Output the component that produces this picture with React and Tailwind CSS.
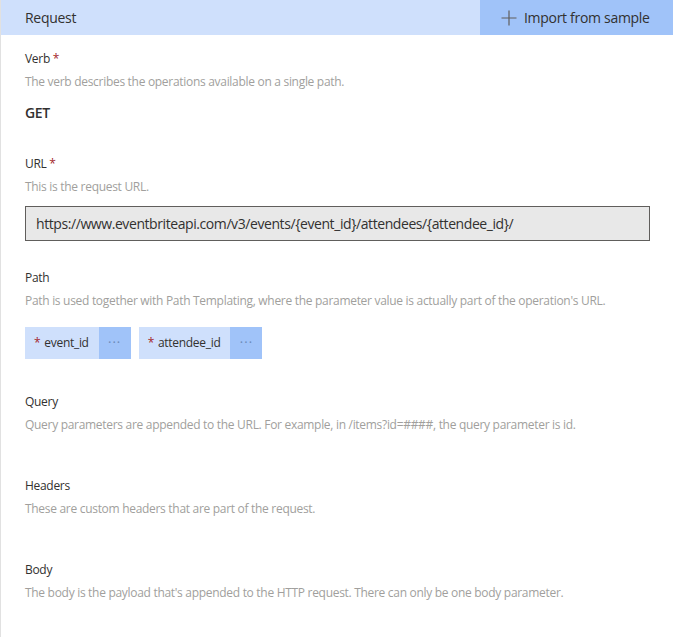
import React from "react";

const font = { fontFamily: '"Open Sans", "Noto Sans", sans-serif' };

function Label({ children, required }) {
  return (
    <div className="text-[12px] leading-[16px] tracking-[-0.3px] text-[#323130]">
      {children}
      {required && <span className="text-[#a4262c]"> *</span>}
    </div>
  );
}

function Desc({ children }) {
  return <div className="mt-[7px] text-[12px] leading-[16px] tracking-[-0.3px] text-[#a19f9d]">{children}</div>;
}

function Chip({ name }) {
  return (
    <div className="flex h-[32px] bg-[#cfe0fc]">
      <div className="flex items-center pl-[9px] pr-[10px] text-[12px] tracking-[-0.3px] text-[#323130]">
        <span className="text-[#a4262c]">*</span>
        <span className="ml-[4px]">{name}</span>
      </div>
      <div className="flex w-[32px] items-center justify-center bg-[#a0c3f9] text-[13px] tracking-[1px] text-[#6b8ab8]">
        ···
      </div>
    </div>
  );
}

export default function App() {
  return (
    <div className="h-[637px] w-[673px] border-l border-[#e1e1e1] bg-white" style={font}>
      <div className="flex h-[35px] items-center justify-between bg-[#cfe0fc]">
        <div className="pl-[24px] text-[14px] tracking-[-0.3px] text-[#323130]">Request</div>
        <div className="flex h-full w-[193px] items-center bg-[#a0c3f9] pl-[21px] text-[14px] tracking-[-0.3px] text-[#323130]">
          <svg width="16" height="16" viewBox="0 0 16 16" className="mr-[7px]">
            <path d="M8 0.5V15.5M0.5 8H15.5" stroke="#605e5c" strokeWidth="1.2" fill="none" />
          </svg>
          Import from sample
        </div>
      </div>
      <div className="px-[24px]">
        <div className="mt-[16px]">
          <Label required>Verb</Label>
          <Desc>The verb describes the operations available on a single path.</Desc>
          <div className="mt-[13px] text-[14px] font-semibold leading-[20px] tracking-[-0.3px] text-[#323130]">GET</div>
        </div>
        <div className="mt-[33px]">
          <Label required>URL</Label>
          <Desc>This is the request URL.</Desc>
          <div className="mt-[11px] flex h-[35px] w-[625px] items-center border border-[#605e5c] bg-[#e8e8e8] px-[10px] text-[14px] tracking-[-0.42px] text-[#323130]">
            https://www.eventbriteapi.com/v3/events/{"{event_id}"}/attendees/{"{attendee_id}"}/
          </div>
        </div>
        <div className="mt-[29px]">
          <Label>Path</Label>
          <Desc>Path is used together with Path Templating, where the parameter value is actually part of the operation's URL.</Desc>
          <div className="mt-[18px] flex gap-[8px]">
            <Chip name="event_id" />
            <Chip name="attendee_id" />
          </div>
        </div>
        <div className="mt-[35px]">
          <Label>Query</Label>
          <Desc>Query parameters are appended to the URL. For example, in /items?id=####, the query parameter is id.</Desc>
        </div>
        <div className="mt-[45px]">
          <Label>Headers</Label>
          <Desc>These are custom headers that are part of the request.</Desc>
        </div>
        <div className="mt-[45px]">
          <Label>Body</Label>
          <Desc>The body is the payload that's appended to the HTTP request. There can only be one body parameter.</Desc>
        </div>
      </div>
    </div>
  );
}
